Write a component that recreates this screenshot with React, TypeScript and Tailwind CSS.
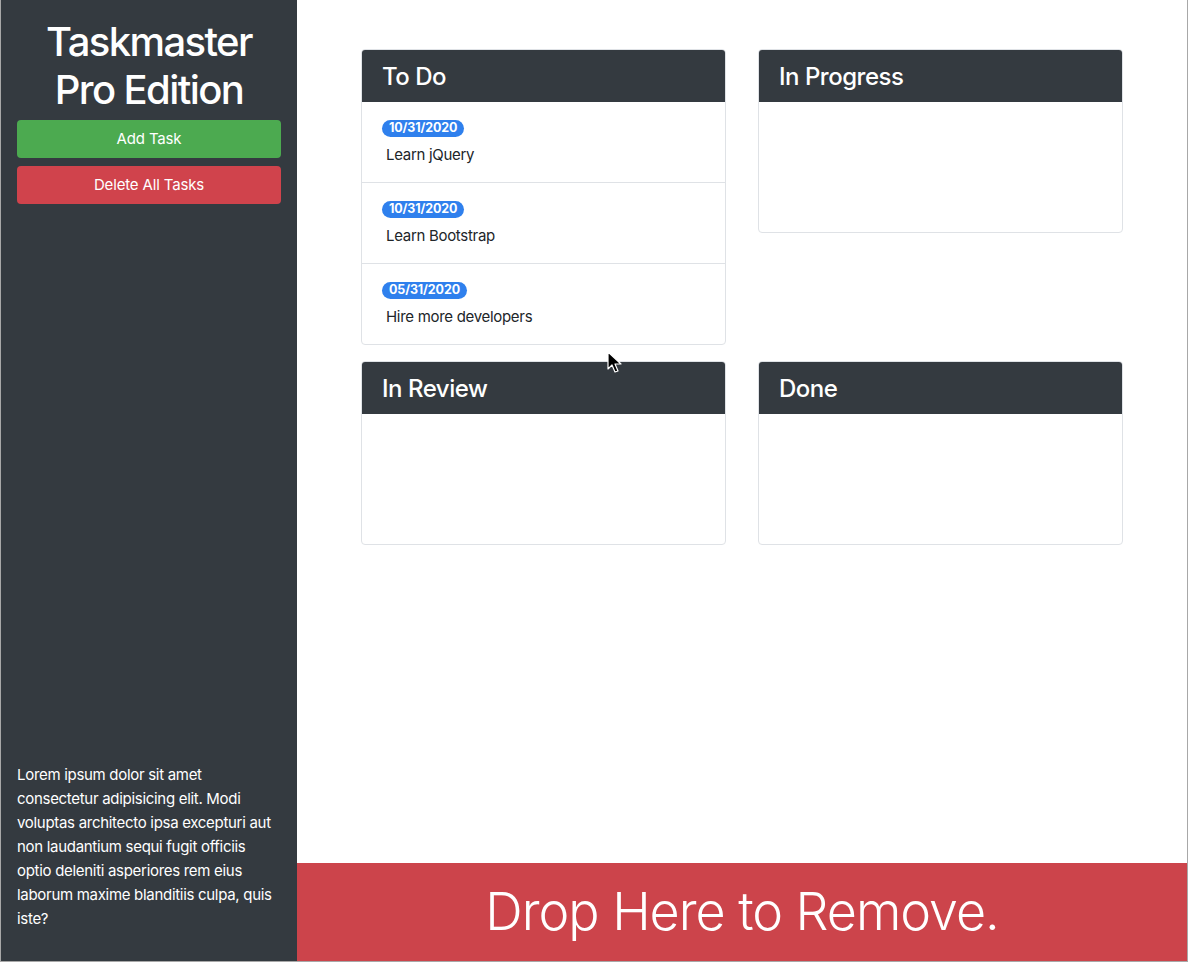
import React from "react";

type Task = { date: string; text: string };

const columns: { title: string; tasks: Task[] }[] = [
  {
    title: "To Do",
    tasks: [
      { date: "10/31/2020", text: "Learn jQuery" },
      { date: "10/31/2020", text: "Learn Bootstrap" },
      { date: "05/31/2020", text: "Hire more developers" },
    ],
  },
  { title: "In Progress", tasks: [] },
  { title: "In Review", tasks: [] },
  { title: "Done", tasks: [] },
];

function TaskCard({ title, tasks }: { title: string; tasks: Task[] }) {
  return (
    <div className="flex flex-col overflow-hidden rounded border border-[#dfe2e6] bg-white">
      <div className="flex h-[52px] items-center bg-[#343a40] px-5 pt-[2px] text-[24px] font-medium tracking-[-0.02em] text-white">
        {title}
      </div>
      <ul className="min-h-[130px]">
        {tasks.map((task, i) => (
          <li
            key={i}
            className="border-b border-[#dfe2e6] px-5 pb-[15px] pt-[18px] last:border-b-0"
          >
            <span className="flex h-[17px] w-fit items-center rounded-full bg-[#2f80ed] px-[7px] text-[12.5px] font-bold leading-none tracking-[-0.01em] text-white">
              {task.date}
            </span>
            <p className="mt-[6px] px-1 text-[15px] leading-6 tracking-[-0.02em] text-[#212529]">
              {task.text}
            </p>
          </li>
        ))}
      </ul>
    </div>
  );
}

export default function App() {
  return (
    <div
      className="relative flex h-[962px] w-full border-b border-l border-r border-[#a8a8a8]"
      style={{ fontFamily: "Inter, 'Noto Sans', sans-serif" }}
    >
      <aside className="flex w-[296px] shrink-0 flex-col justify-between bg-[#343a40] px-4 pb-[30px] pt-[18px] text-white">
        <div>
          <h1 className="text-center text-[40px] font-medium leading-[48px] tracking-[-0.04em]">
            Taskmaster
            <br />
            Pro Edition
          </h1>
          <div className="mt-[6px] flex flex-col gap-2">
            <button className="h-[38px] rounded bg-[#4caa50] text-[15px] tracking-[-0.01em] text-white">
              Add Task
            </button>
            <button className="h-[38px] rounded bg-[#d0434c] text-[15px] tracking-[-0.01em] text-white">
              Delete All Tasks
            </button>
          </div>
        </div>
        <p className="text-[15px] leading-6 tracking-[-0.02em]">
          Lorem ipsum dolor sit amet consectetur adipisicing elit. Modi voluptas
          architecto ipsa excepturi aut non laudantium sequi fugit officiis optio
          deleniti asperiores rem eius laborum maxime blanditiis culpa, quis iste?
        </p>
      </aside>

      <main className="flex flex-1 flex-col bg-white">
        <div className="grid grid-cols-2 items-start gap-x-8 gap-y-4 px-16 pt-[49px]">
          {columns.map((col) => (
            <TaskCard key={col.title} title={col.title} tasks={col.tasks} />
          ))}
        </div>
        <div className="flex-1" />
        <div className="flex h-[98px] items-center justify-center bg-[#cc444b] text-[52px] font-light tracking-[-0.02em] text-white">
          Drop Here to Remove.
        </div>
      </main>

      <svg
        className="pointer-events-none absolute left-[606px] top-[351px]"
        width="16"
        height="24"
        viewBox="0 0 16 24"
      >
        <path
          d="M1 1 L1 18 L5 14 L8 21 L11 20 L8 13 L14 13 Z"
          fill="#000"
          stroke="#fff"
          strokeWidth="1.2"
          strokeLinejoin="round"
        />
      </svg>
    </div>
  );
}
